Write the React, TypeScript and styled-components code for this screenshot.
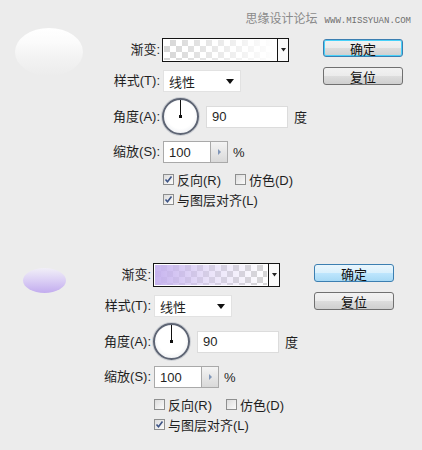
import React from "react";
import styled, { createGlobalStyle, css } from "styled-components";

const Global = createGlobalStyle`
  html, body { margin: 0; padding: 0; background: #ececec; }
  body { width: 422px; height: 450px; overflow: hidden; font-family: "Liberation Sans", "Noto Sans CJK SC", sans-serif; }
`;

const FONT = `"Liberation Sans", "Noto Sans CJK SC", sans-serif`;

const Page = styled.div`
  position: relative;
  width: 422px;
  height: 450px;
  background: #ececec;
  padding-top: 38px;
  box-sizing: border-box;
  display: flex;
  flex-direction: column;
  gap: 57px;
`;

const Watermark = styled.div`
  position: absolute;
  top: 9px;
  right: 11px;
  display: flex;
  align-items: baseline;
  gap: 7px;
  color: #8a8a8a;
  font-size: 12px;
  font-family: "Noto Sans CJK SC", sans-serif;
`;

const WatermarkUrl = styled.span`
  font-family: "Liberation Mono", monospace;
  font-size: 9px;
  color: #6f6f6f;
`;

const Panel = styled.div`
  display: flex;
  align-items: flex-start;
`;

const Preview = styled.div<{ $w: number }>`
  width: ${(p) => p.$w}px;
  flex: none;
`;

const Blob = styled.div<{ $variant: "white" | "purple" }>`
  ${(p) =>
    p.$variant === "white"
      ? css`
          margin: -10px 0 0 15px;
          width: 68px;
          height: 48px;
          border-radius: 50%;
          background: linear-gradient(
            to bottom,
            #ffffff 0%,
            #fbfbfb 30%,
            #f3f3f3 60%,
            rgba(236, 236, 236, 0) 100%
          );
        `
      : css`
          margin: 5px 0 0 23px;
          width: 43px;
          height: 25px;
          border-radius: 50%;
          background: linear-gradient(to bottom, #f1eff7 0%, #ddd2f5 45%, #c2acee 100%);
        `}
`;

const Form = styled.div`
  display: flex;
  flex-direction: column;
  width: 207px;
  flex: none;
`;

const Row = styled.div<{ $mt: number; $h: number }>`
  display: grid;
  grid-template-columns: 60px 145px;
  column-gap: 2px;
  align-items: center;
  height: ${(p) => p.$h}px;
  margin-top: ${(p) => p.$mt}px;
`;

const Label = styled.div`
  justify-self: end;
  font-family: ${FONT};
  font-size: 13px;
  color: #1f1f1f;
  white-space: nowrap;
  line-height: 16px;
`;

const Controls = styled.div<{ $gap?: number; $indent?: number }>`
  display: flex;
  align-items: center;
  gap: ${(p) => p.$gap ?? 0}px;
  padding-left: ${(p) => p.$indent ?? 0}px;
  height: 100%;
`;

const Swatch = styled.div`
  box-sizing: border-box;
  width: 127px;
  height: 24px;
  border: 1px solid #141414;
  display: flex;
  background: #fff;
`;

const SwatchFill = styled.div<{ $variant: "white" | "purple" }>`
  flex: 1;
  margin: 1px;
  background-color: #fff;
  background-image: ${(p) =>
      p.$variant === "white"
        ? "linear-gradient(to right, rgba(255,255,255,0) 0%, rgba(255,255,255,0.5) 50%, #fff 100%)"
        : "linear-gradient(to right, rgba(196,176,238,0.95) 0%, rgba(214,200,244,0.5) 50%, rgba(255,255,255,0) 100%)"},
    linear-gradient(45deg, #d6d6d6 25%, transparent 25%, transparent 75%, #d6d6d6 75%),
    linear-gradient(45deg, #d6d6d6 25%, transparent 25%, transparent 75%, #d6d6d6 75%);
  background-size: 100% 100%, 12px 12px, 12px 12px;
  background-position: 0 0, 0 0, 6px 6px;
`;

const SwatchArrow = styled.div`
  width: 10px;
  border-left: 1px solid #141414;
  display: flex;
  align-items: center;
  justify-content: center;
  background: #fafafa;
`;

const Select = styled.div`
  box-sizing: border-box;
  margin-left: 1px;
  width: 78px;
  height: 22px;
  background: #fff;
  border: 1px solid #e2e2e2;
  display: flex;
  align-items: center;
  justify-content: space-between;
  padding: 0 6px 0 5px;
  font-size: 13px;
  color: #1f1f1f;
`;

const Dial = styled.div`
  position: relative;
  box-sizing: border-box;
  width: 37px;
  height: 37px;
  border-radius: 50%;
  border: 2px solid #5e6574;
  background: radial-gradient(circle at 50% 45%, #ffffff 55%, #eef0f3 80%, #d8dce3 100%);
  box-shadow: 0 0 0 1px rgba(150, 158, 172, 0.35);
  flex: none;
`;

const DialHand = styled.div`
  position: absolute;
  left: 50%;
  top: 0;
  width: 1px;
  height: 50%;
  margin-left: -0.5px;
  background: #111;
  &::after {
    content: "";
    position: absolute;
    left: -1px;
    bottom: -1px;
    width: 3px;
    height: 3px;
    background: #111;
  }
`;

const TextBox = styled.div<{ $w: number; $dark?: boolean }>`
  box-sizing: border-box;
  width: ${(p) => p.$w}px;
  height: 22px;
  background: #fff;
  border: 1px solid ${(p) => (p.$dark ? "#a9a9a9" : "#dcdcdc")};
  border-right: ${(p) => (p.$dark ? "none" : `1px solid #dcdcdc`)};
  display: flex;
  align-items: center;
  padding-left: 5px;
  font-size: 13px;
  color: #1f1f1f;
`;

const Spinner = styled.div`
  box-sizing: border-box;
  width: 18px;
  height: 22px;
  border: 1px solid #a9a9a9;
  background: linear-gradient(to bottom, #f4f4f4, #d9d9d9);
  display: flex;
  align-items: center;
  justify-content: center;
`;

const Unit = styled.span<{ $ml: number }>`
  margin-left: ${(p) => p.$ml}px;
  font-size: 13px;
  color: #1f1f1f;
`;

const Check = styled.label<{ $w?: number }>`
  display: flex;
  align-items: center;
  gap: 3px;
  width: ${(p) => (p.$w ? `${p.$w}px` : "auto")};
  font-family: ${FONT};
  font-size: 13px;
  color: #1f1f1f;
  white-space: nowrap;
`;

const Box = styled.span`
  box-sizing: border-box;
  width: 11px;
  height: 11px;
  border: 1px solid #8e8f8f;
  background: linear-gradient(135deg, #dcdcdc, #fbfbfb);
  display: flex;
  align-items: center;
  justify-content: center;
  flex: none;
`;

const Buttons = styled.div`
  display: flex;
  flex-direction: column;
  gap: 10px;
  margin-left: 16px;
  margin-top: 1px;
`;

const Button = styled.div<{ $kind: "default" | "hover" | "normal" }>`
  box-sizing: border-box;
  width: 80px;
  height: 18px;
  border-radius: 3px;
  display: flex;
  align-items: center;
  justify-content: center;
  font-size: 13px;
  color: #111;
  font-family: "Noto Sans CJK SC", sans-serif;
  ${(p) =>
    p.$kind === "normal"
      ? css`
          border: 1px solid #707070;
          background: linear-gradient(to bottom, #f2f2f2 0%, #ebebeb 50%, #dddddd 51%, #cfcfcf 100%);
        `
      : p.$kind === "default"
      ? css`
          border: 1px solid #3c7fb1;
          background: linear-gradient(to bottom, #f2f2f2 0%, #ebebeb 50%, #dddddd 51%, #cfcfcf 100%);
          box-shadow: inset 0 0 0 1px #48d1f9;
        `
      : css`
          border: 1px solid #3c7fb1;
          background: linear-gradient(to bottom, #eaf6fd 0%, #d9f0fc 50%, #bee6fd 51%, #a7d9f5 100%);
        `}
`;

const CheckMark = () => (
  <svg width="9" height="9" viewBox="0 0 9 9">
    <path d="M1.5 4.5 L3.5 6.8 L7.5 1.5" fill="none" stroke="#3d5486" strokeWidth="1.6" />
  </svg>
);

const Tri = ({ dir, color, size }: { dir: "down" | "right"; color: string; size: number }) =>
  dir === "down" ? (
    <svg width={size} height={size / 2 + 1} viewBox={`0 0 ${size} ${size / 2 + 1}`}>
      <path d={`M0 0 L${size} 0 L${size / 2} ${size / 2 + 1} Z`} fill={color} />
    </svg>
  ) : (
    <svg width={3} height={6} viewBox="0 0 3 6">
      <path d="M0 0 L3 3 L0 6 Z" fill={color} />
    </svg>
  );

type PanelProps = {
  variant: "white" | "purple";
  indent: number;
  reverse: boolean;
  okKind: "default" | "hover";
};

const GradientPanel = ({ variant, indent, reverse, okKind }: PanelProps) => (
  <Panel>
    <Preview $w={indent}>
      <Blob $variant={variant} />
    </Preview>
    <Form>
      <Row $mt={0} $h={24}>
        <Label>渐变:</Label>
        <Controls>
          <Swatch>
            <SwatchFill $variant={variant} />
            <SwatchArrow>
              <Tri dir="down" color="#222" size={5} />
            </SwatchArrow>
          </Swatch>
        </Controls>
      </Row>
      <Row $mt={8} $h={22}>
        <Label>样式(T):</Label>
        <Controls>
          <Select>
            <span>线性</span>
            <Tri dir="down" color="#111" size={8} />
          </Select>
        </Controls>
      </Row>
      <Row $mt={6} $h={37}>
        <Label>角度(A):</Label>
        <Controls $gap={7}>
          <Dial>
            <DialHand />
          </Dial>
          <TextBox $w={83}>90</TextBox>
          <Unit $ml={-1}>度</Unit>
        </Controls>
      </Row>
      <Row $mt={6} $h={22}>
        <Label>缩放(S):</Label>
        <Controls $indent={1}>
          <TextBox $w={47} $dark>
            100
          </TextBox>
          <Spinner>
            <Tri dir="right" color="#8096b8" size={6} />
          </Spinner>
          <Unit $ml={5}>%</Unit>
        </Controls>
      </Row>
      <Row $mt={7} $h={16}>
        <span />
        <Controls $indent={1}>
          <Check $w={72}>
            <Box>{reverse && <CheckMark />}</Box>
            反向(R)
          </Check>
          <Check>
            <Box />
            仿色(D)
          </Check>
        </Controls>
      </Row>
      <Row $mt={4} $h={16}>
        <span />
        <Controls $indent={1}>
          <Check>
            <Box>
              <CheckMark />
            </Box>
            与图层对齐(L)
          </Check>
        </Controls>
      </Row>
    </Form>
    <Buttons>
      <Button $kind={okKind}>确定</Button>
      <Button $kind="normal">复位</Button>
    </Buttons>
  </Panel>
);

export default function App() {
  return (
    <>
      <Global />
      <Page>
        <Watermark>
          <span>思缘设计论坛</span>
          <WatermarkUrl>WWW.MISSYUAN.COM</WatermarkUrl>
        </Watermark>
        <GradientPanel variant="white" indent={100} reverse okKind="default" />
        <GradientPanel variant="purple" indent={91} reverse={false} okKind="hover" />
      </Page>
    </>
  );
}
